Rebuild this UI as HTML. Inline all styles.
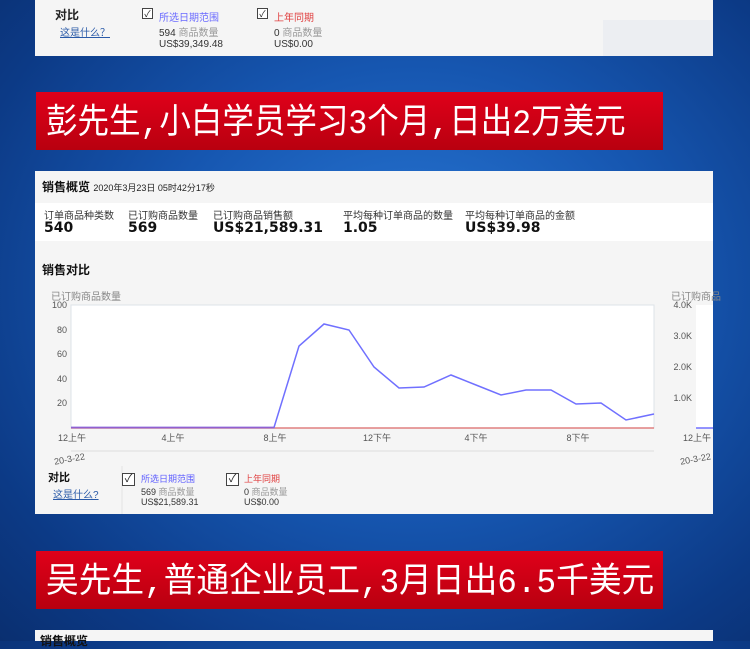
<!DOCTYPE html>
<html><head><meta charset="utf-8"><style>
*{margin:0;padding:0;box-sizing:border-box}
body{width:750px;height:641px;overflow:hidden;position:relative;font-family:"Liberation Sans","Noto Sans CJK SC",sans-serif;background:radial-gradient(ellipse at 55% 45%,#2a7ad8 0%,#1656b0 45%,#0c3a86 80%,#0a2f70 100%)}
.p{position:absolute;background:#f5f5f5}
.t{position:absolute;white-space:nowrap;font-size:10px;color:#333}
.banner{position:absolute;left:36px;width:627px;background:linear-gradient(#e0001a,#b8000f);color:#fff;font-family:"Liberation Mono","Noto Sans CJK SC",sans-serif;font-size:30px;padding-left:10px;padding-top:4px;line-height:58px;height:58px;overflow:hidden}
.banner span{display:inline-block;transform-origin:0 50%}
.cb{position:absolute;width:13px;height:13px;border:1px solid #444;background:#fff;font-size:11px;line-height:11px;text-align:center;color:#222}
.n{position:absolute;white-space:nowrap;font-family:"DejaVu Sans",sans-serif;font-weight:bold;font-size:14px;color:#111}
</style></head><body>
<div class="p" style="left:35px;top:0;width:678px;height:56px"></div>
<div class="p" style="left:603px;top:20px;width:110px;height:36px;background:#eceef2"></div>
<div class="t" style="left:55px;top:6px;font-weight:bold;font-size:12px;color:#222">对比</div>
<div class="t" style="left:60px;top:24px;color:#2a5aa8;text-decoration:underline">这是什么？</div>
<div class="cb" style="left:142px;top:8px;width:11px;height:11px;font-size:9px">✓</div>
<div class="t" style="left:159px;top:9px;color:#6a6aff">所选日期范围</div>
<div class="t" style="left:159px;top:24px">594 <span style="color:#999">商品数量</span></div>
<div class="t" style="left:159px;top:39px">US$39,349.48</div>
<div class="cb" style="left:257px;top:8px;width:11px;height:11px;font-size:9px">✓</div>
<div class="t" style="left:274px;top:9px;color:#e04040">上年同期</div>
<div class="t" style="left:274px;top:24px">0 <span style="color:#999">商品数量</span></div>
<div class="t" style="left:274px;top:39px">US$0.00</div>

<div class="banner" style="top:92px"><span style="transform:scale(1.05,1.15)">彭先生,小白学员学习3个月,日出2万美元</span></div>

<div class="p" style="left:35px;top:171px;width:678px;height:343px"></div>
<div class="p" style="left:35px;top:203px;width:678px;height:38px;background:#fff"></div>
<div class="t" style="left:42px;top:178px;font-size:12px;font-weight:bold;color:#111">销售概览 <span style="font-size:9px;font-weight:normal;color:#222">2020年3月23日 05时42分17秒</span></div>
<div class="t" style="left:44px;top:207px">订单商品种类数</div>
<div class="t" style="left:128px;top:207px">已订购商品数量</div>
<div class="t" style="left:213px;top:207px">已订购商品销售额</div>
<div class="t" style="left:343px;top:207px">平均每种订单商品的数量</div>
<div class="t" style="left:465px;top:207px">平均每种订单商品的金额</div>
<div class="n" style="left:44px;top:220px">540</div>
<div class="n" style="left:128px;top:220px">569</div>
<div class="n" style="left:213px;top:220px">US$21,589.31</div>
<div class="n" style="left:343px;top:220px">1.05</div>
<div class="n" style="left:465px;top:220px">US$39.98</div>
<div class="t" style="left:42px;top:261px;font-size:12px;font-weight:bold;color:#111">销售对比</div>
<div class="t" style="left:51px;top:288px;color:#888">已订购商品数量</div>
<div class="t" style="left:671px;top:288px;color:#888">已订购商品</div>
<svg style="position:absolute;left:0;top:0" width="750" height="641">
<rect x="71" y="305" width="583" height="123" fill="#fff" stroke="#dde3e8"/>
<rect x="696" y="305" width="17" height="123" fill="#fff"/>
<g font-family="Liberation Sans,sans-serif" font-size="9" fill="#555" text-anchor="end">
<text x="67" y="308">100</text><text x="67" y="333">80</text><text x="67" y="357">60</text><text x="67" y="382">40</text><text x="67" y="406">20</text>
<text x="692" y="308">4.0K</text><text x="692" y="339">3.0K</text><text x="692" y="370">2.0K</text><text x="692" y="401">1.0K</text>
</g>
<line x1="71" y1="428" x2="654" y2="428" stroke="#e08080" stroke-width="1.5"/>
<polyline fill="none" stroke="#7070ff" stroke-width="1.5" points="71,427.5 274,427.5 299,346 324,324 349,330 374,367 399,388 424,387 451,375 476,385 501,395 526,390 551,390 576,404 601,403 626,420 654,414"/>
<line x1="71" y1="427.5" x2="274" y2="427.5" stroke="#9060d0" stroke-width="1.5"/>
<line x1="696" y1="428" x2="713" y2="428" stroke="#7070ff" stroke-width="1.5"/>
<g font-family="Liberation Sans,Noto Sans CJK SC,sans-serif" font-size="9" fill="#555" text-anchor="middle">
<text x="72" y="441">12上午</text><text x="173" y="441">4上午</text><text x="275" y="441">8上午</text><text x="377" y="441">12下午</text><text x="476" y="441">4下午</text><text x="578" y="441">8下午</text><text x="697" y="441">12上午</text>
<text x="70" y="462" transform="rotate(-10 70 462)">20-3-22</text>
<text x="696" y="462" transform="rotate(-10 696 462)">20-3-22</text>
</g>
<line x1="71" y1="451" x2="654" y2="451" stroke="#ddd"/>
<line x1="122" y1="466" x2="122" y2="514" stroke="#e2e2e2"/>
</svg>
<div class="t" style="left:48px;top:469px;font-weight:bold;font-size:11px;color:#111">对比</div>
<div class="t" style="left:53px;top:486px;color:#2a5aa8;text-decoration:underline">这是什么?</div>
<div class="cb" style="left:122px;top:473px">✓</div>
<div class="t" style="left:141px;top:472px;color:#6060ff;font-size:9px">所选日期范围</div>
<div class="t" style="left:141px;top:485px;font-size:9px">569 <span style="color:#999">商品数量</span></div>
<div class="t" style="left:141px;top:497px;font-size:9px">US$21,589.31</div>
<div class="cb" style="left:226px;top:473px">✓</div>
<div class="t" style="left:244px;top:472px;color:#e04040;font-size:9px">上年同期</div>
<div class="t" style="left:244px;top:485px;font-size:9px">0 <span style="color:#999">商品数量</span></div>
<div class="t" style="left:244px;top:497px;font-size:9px">US$0.00</div>

<div class="banner" style="top:551px"><span style="transform:scale(1.09,1.15)">吴先生,普通企业员工,3月日出6.5千美元</span></div>

<div class="p" style="left:35px;top:630px;width:678px;height:11px"></div>
<div class="t" style="left:40px;top:632px;font-size:12px;font-weight:bold;color:#111">销售概览</div>
</body></html>
